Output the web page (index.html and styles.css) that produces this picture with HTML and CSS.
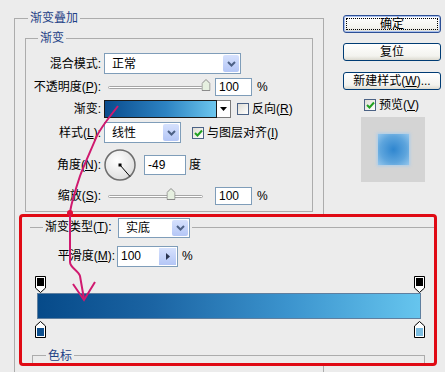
FILE: index.html
```html
<!DOCTYPE html>
<html lang="zh-CN">
<head>
    <meta charset="UTF-8">
    <title>渐变叠加</title>
    <link rel="stylesheet" href="styles.css">
</head>
<body>
    <div class="dialog">
        <fieldset class="group outer">
            <legend>渐变叠加</legend>
            <fieldset class="group inner">
                <legend>渐变</legend>
                <div class="form">
                    <label class="lbl">混合模式:</label>
                    <div class="ctl">
                        <div class="select blend">
                            <span class="val">正常</span>
                            <span class="drop"><svg width="9" height="6" viewBox="0 0 9 6"><polyline points="1,1 4.5,4.5 8,1" fill="none" stroke="#4d6185" stroke-width="2"/></svg></span>
                        </div>
                    </div>

                    <label class="lbl">不透明度(<u>P</u>):</label>
                    <div class="ctl">
                        <div class="slider">
                            <div class="rail"></div>
                            <div class="range">
                                <span class="thumb" style="left: 100%"><svg width="9" height="12" viewBox="0 0 9 12"><path d="M0.5,4.5 L4.5,0.5 L8.5,4.5 V11.5 H0.5 Z" fill="#e6f0e0" stroke="#8b8b8b"/></svg></span>
                            </div>
                        </div>
                        <div class="field pct">100</div>
                        <span class="unit">%</span>
                    </div>

                    <label class="lbl">渐变:</label>
                    <div class="ctl">
                        <div class="swatch"></div>
                        <div class="swatch-drop"><svg width="7" height="4" viewBox="0 0 7 4"><path d="M0,0 H7 L3.5,4 Z" fill="#000"/></svg></div>
                        <span class="check reverse"></span>
                        <span class="check-text">反向(<u>R</u>)</span>
                    </div>

                    <label class="lbl">样式(<u>L</u>):</label>
                    <div class="ctl">
                        <div class="select style">
                            <span class="val">线性</span>
                            <span class="drop"><svg width="9" height="6" viewBox="0 0 9 6"><polyline points="1,1 4.5,4.5 8,1" fill="none" stroke="#4d6185" stroke-width="2"/></svg></span>
                        </div>
                        <span class="check align checked"><svg width="9" height="8" viewBox="0 0 9 8"><polyline points="1,4 3.5,6.5 8,1.5" fill="none" stroke="#21a121" stroke-width="2"/></svg></span>
                        <span class="check-text">与图层对齐(<u>I</u>)</span>
                    </div>

                    <label class="lbl">角度(<u>N</u>):</label>
                    <div class="ctl">
                        <svg class="dial" width="32" height="36" viewBox="0 0 32 36">
                            <defs>
                                <radialGradient id="dialFill" cx="40%" cy="35%" r="70%">
                                    <stop offset="0" stop-color="#ffffff"/>
                                    <stop offset="1" stop-color="#dcdcdc"/>
                                </radialGradient>
                            </defs>
                            <circle cx="16" cy="18" r="15" fill="url(#dialFill)" stroke="#6d6d6d" stroke-width="1.5"/>
                            <line x1="16" y1="18" x2="26" y2="29.5" stroke="#000" stroke-width="1"/>
                            <rect x="14.5" y="16.5" width="3" height="3" fill="#000"/>
                        </svg>
                        <div class="field angle">-49</div>
                        <span class="unit">度</span>
                    </div>

                    <label class="lbl">缩放(<u>S</u>):</label>
                    <div class="ctl">
                        <div class="slider">
                            <div class="rail"></div>
                            <div class="range">
                                <span class="thumb" style="left: 64%"><svg width="9" height="12" viewBox="0 0 9 12"><path d="M0.5,4.5 L4.5,0.5 L8.5,4.5 V11.5 H0.5 Z" fill="#e6f0e0" stroke="#8b8b8b"/></svg></span>
                            </div>
                        </div>
                        <div class="field pct">100</div>
                        <span class="unit">%</span>
                    </div>
                </div>
            </fieldset>

            <div class="editor">
                <fieldset class="type-group">
                    <legend>
                        <span class="type-label">渐变类型(<u>T</u>):</span>
                        <span class="select type">
                            <span class="val">实底</span>
                            <span class="drop"><svg width="9" height="6" viewBox="0 0 9 6"><polyline points="1,1 4.5,4.5 8,1" fill="none" stroke="#4d6185" stroke-width="2"/></svg></span>
                        </span>
                    </legend>
                    <div class="smooth-row">
                        <span class="smooth-label">平滑度(<u>M</u>):</span>
                        <div class="spin">
                            <span class="val">100</span>
                            <span class="spin-btn"><svg width="4" height="7" viewBox="0 0 4 7"><path d="M0,0 L4,3.5 L0,7 Z" fill="#2a3550"/></svg></span>
                        </div>
                        <span class="unit">%</span>
                    </div>
                </fieldset>

                <div class="stops top">
                    <svg width="11" height="17" viewBox="0 0 11 17"><path d="M0.5,0.5 H10.5 V12 L5.5,16.5 L0.5,12 Z" fill="#fff" stroke="#000"/><rect x="2" y="2" width="7" height="8" fill="#000"/></svg>
                    <svg width="11" height="17" viewBox="0 0 11 17"><path d="M0.5,0.5 H10.5 V12 L5.5,16.5 L0.5,12 Z" fill="#fff" stroke="#000"/><rect x="2" y="2" width="7" height="8" fill="#000"/></svg>
                </div>
                <div class="bar"></div>
                <div class="stops bottom">
                    <svg width="11" height="17" viewBox="0 0 11 17"><path d="M5.5,0.5 L10.5,5 V16.5 H0.5 V5 Z" fill="#fff" stroke="#000"/><rect x="2" y="7" width="7" height="8" fill="#0d4f8e"/></svg>
                    <svg width="11" height="17" viewBox="0 0 11 17"><path d="M5.5,0.5 L10.5,5 V16.5 H0.5 V5 Z" fill="#fff" stroke="#000"/><rect x="2" y="7" width="7" height="8" fill="#7cbde0"/></svg>
                </div>

                <fieldset class="group stops-group">
                    <legend>色标</legend>
                </fieldset>
            </div>
        </fieldset>

        <div class="side">
            <div class="btn default">确定</div>
            <div class="btn">复位</div>
            <div class="btn">新建样式(<u>W</u>)...</div>
            <div class="preview-row">
                <span class="check checked"><svg width="9" height="8" viewBox="0 0 9 8"><polyline points="1,4 3.5,6.5 8,1.5" fill="none" stroke="#21a121" stroke-width="2"/></svg></span>
                <span class="check-text">预览(<u>V</u>)</span>
            </div>
            <div class="preview">
                <div class="preview-swatch"></div>
            </div>
        </div>
    </div>

    <!-- hand-drawn annotation arrow -->
    <svg class="annotation" width="445" height="372" viewBox="0 0 445 372">
        <path d="M118,106 C112,114 100,128 96,138 C91,150 84,165 80,176 C76,188 72,200 70,212 L70,262 C70,268 78,270 80,276 L84,299" fill="none" stroke="#d0196f" stroke-width="2"/>
        <path d="M73,284 L84,300 L95,282" fill="none" stroke="#d0196f" stroke-width="2"/>
        <circle cx="70" cy="213" r="3" fill="#e0103c"/>
    </svg>
</body>
</html>
```

FILE: styles.css
```css
* {
    box-sizing: border-box;
}

body {
    margin: 0;
    width: 445px;
    height: 372px;
    overflow: hidden;
    position: relative;
    background-color: #ececec;
    font-family: "Liberation Sans", "Noto Sans CJK SC", sans-serif;
    font-size: 12px;
    line-height: 14px;
    color: #000;
}

u {
    text-underline-offset: 1px;
}

.dialog {
    display: flex;
    align-items: flex-start;
    padding: 11px 0 0 14px;
}

/* group boxes */
.group {
    margin: 0;
    padding: 0;
    min-width: 0;
    border: 1px solid #acacac;
}

.group > legend {
    padding: 0 2px;
    color: #1f4287;
    line-height: 14px;
}

.outer {
    width: 310px;
    height: 361px;
    border-bottom: none;
}

.outer > legend {
    margin-left: 13px;
}

.inner {
    margin: 6px 10px 0 10px;
    height: 181px;
}

.inner > legend {
    margin-left: 12px;
}

.form {
    display: grid;
    grid-template-columns: 75px auto;
    grid-template-rows: 21px 18px 18px 21px 36px 18px;
    row-gap: 4px;
    column-gap: 3px;
    align-items: center;
    padding-top: 8px;
}

.lbl {
    text-align: right;
    white-space: nowrap;
}

.ctl {
    display: flex;
    align-items: center;
    height: 100%;
}

/* controls */
.select {
    display: flex;
    align-items: center;
    height: 21px;
    border: 1px solid #7f9db9;
    background-color: #fff;
}

.select .val {
    flex-grow: 1;
    padding-left: 7px;
}

.select .drop {
    align-self: stretch;
    width: 16px;
    margin: 1px;
    border-radius: 2px;
    background: linear-gradient(#d6e1fd, #b4c6f6);
    display: flex;
    align-items: center;
    justify-content: center;
}

.select.blend {
    width: 137px;
}

.select.style {
    width: 77px;
}

.select.type {
    display: inline-flex;
    width: 72px;
    height: 20px;
    vertical-align: middle;
}

.field {
    height: 18px;
    border: 1px solid #7f9db9;
    background-color: #fff;
    padding-left: 3px;
    display: flex;
    align-items: center;
}

.field.pct {
    width: 37px;
    margin-left: 4px;
}

.field.angle {
    width: 42px;
    height: 20px;
    margin-left: 8px;
}

.unit {
    margin-left: 5px;
}

.field.angle + .unit {
    margin-left: 3px;
}

.slider {
    position: relative;
    width: 107px;
    height: 18px;
}

.slider .rail {
    position: absolute;
    left: 4px;
    right: 8px;
    top: 8px;
    height: 3px;
    border: 1px solid #a5a5a5;
    border-radius: 2px;
    background-color: #fff;
}

.slider .range {
    position: relative;
    height: 100%;
    margin: 0 5px 0 4px;
}

.slider .thumb {
    position: absolute;
    top: 1px;
    width: 9px;
    height: 12px;
    transform: translateX(-50%);
    display: flex;
}

.swatch {
    width: 113px;
    height: 18px;
    border: 1px solid #1a1a1a;
    background: linear-gradient(to right, #0a4c8e, #2d83c2 55%, #6cc6ee);
}

.swatch-drop {
    width: 14px;
    height: 18px;
    border: 1px solid #7a7a7a;
    border-left: none;
    background-color: #fff;
    display: flex;
    align-items: center;
    justify-content: center;
}

.check {
    width: 12px;
    height: 12px;
    border: 1px solid #4b6285;
    background: linear-gradient(135deg, #dedcd4, #ffffff);
    display: inline-flex;
    align-items: center;
    justify-content: center;
    flex-shrink: 0;
}

.check.reverse {
    margin-left: 6px;
}

.check.align {
    margin-left: 11px;
}

.check-text {
    margin-left: 3px;
    white-space: nowrap;
}

/* gradient editor, circled in red */
.editor {
    margin: 2px -114px 0 4px;
    height: 152px;
    border: 3px solid #e00a14;
    border-radius: 4px;
    background-color: #ececec;
    overflow: hidden;
}

.type-group {
    margin: 0 0 0 8px;
    padding: 0;
    min-width: 0;
    border: none;
    border-top: 1px solid #acacac;
}

.type-group legend {
    margin-left: 13px;
    padding: 0 2px;
    line-height: 20px;
    color: #000;
}

.type-label {
    margin-right: 3px;
}

.smooth-row {
    display: flex;
    align-items: center;
    margin-top: 8px;
}

.smooth-label {
    width: 85px;
    text-align: right;
}

.spin {
    display: flex;
    align-items: center;
    width: 61px;
    height: 21px;
    margin-left: 2px;
    border: 1px solid #7f9db9;
    background-color: #fff;
}

.spin .val {
    flex-grow: 1;
    padding-left: 3px;
}

.spin-btn {
    align-self: stretch;
    width: 17px;
    margin: 1px;
    background: linear-gradient(#d6e1fd, #b4c6f6);
    display: flex;
    align-items: center;
    justify-content: center;
}

.smooth-row .unit {
    margin-left: 4px;
}

.stops {
    display: flex;
    justify-content: space-between;
    width: 390px;
    height: 17px;
    margin-left: 13px;
}

.stops.top {
    margin-top: 9px;
}

.stops.bottom {
    margin-top: 2px;
}

.bar {
    width: 384px;
    height: 26px;
    margin-left: 15px;
    border: 1px solid #5f7f9f;
    background: linear-gradient(to right, #064a89, #1b64a3 30%, #3b93cd 65%, #66c5ee);
}

.stops-group {
    margin: 11px 0 0 10px;
    width: 393px;
    height: 40px;
}

.stops-group > legend {
    margin-left: 13px;
}

/* right column */
.side {
    width: 98px;
    margin: 4px 0 0 19px;
    display: flex;
    flex-direction: column;
}

.btn {
    height: 18px;
    border: 1px solid #003c74;
    border-radius: 3px;
    background: linear-gradient(#ffffff, #f3f3ee 75%, #dcdad0);
    text-align: center;
    line-height: 16px;
    white-space: nowrap;
}

.btn + .btn {
    margin-top: 10px;
}

.btn + .btn + .btn {
    margin-top: 11px;
}

.btn.default {
    border-color: #2c4f95;
    box-shadow: inset 0 0 0 1px #a9c0ee;
    outline: 1px dotted #000;
    outline-offset: -4px;
}

.preview-row {
    display: flex;
    align-items: center;
    height: 13px;
    margin-top: 8px;
    padding-left: 21px;
}

.preview {
    width: 64px;
    height: 65px;
    margin: 6px 0 0 18px;
    background-color: #d4d4d4;
    display: flex;
    align-items: center;
    justify-content: center;
}

.preview-swatch {
    width: 31px;
    height: 31px;
    background: radial-gradient(circle, #2f86cf, #5ea5dd 60%, #94c6ec);
    box-shadow: 0 0 3px 1px #a9cdec;
}

.annotation {
    position: absolute;
    left: 0;
    top: 0;
    pointer-events: none;
}
```
